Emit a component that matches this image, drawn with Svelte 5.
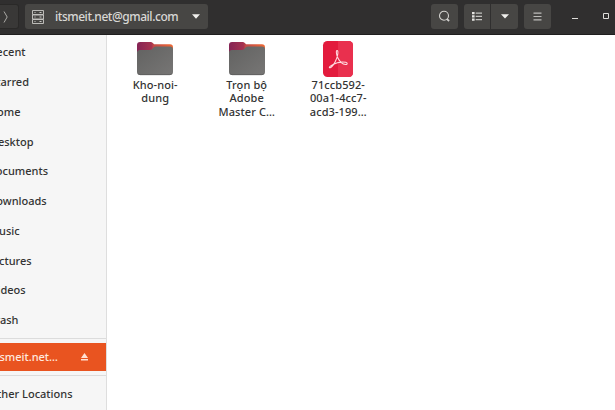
<script>
  // `end` is where each label stops inside the partly scrolled-off sidebar
  const places = [
    { name: 'Recent', end: 25.5 },
    { name: 'Starred', end: 29 },
    { name: 'Home', end: 20.5 },
    { name: 'Desktop', end: 33.5 },
    { name: 'Documents', end: 48 },
    { name: 'Downloads', end: 46.7 },
    { name: 'Music', end: 19.7 },
    { name: 'Pictures', end: 31.7 },
    { name: 'Videos', end: 25.7 },
    { name: 'Trash', end: 18.5 }
  ];
  const files = [
    { kind: 'folder', lines: ['Kho-noi-', 'dung'] },
    { kind: 'folder', lines: ['Trọn bộ', 'Adobe', 'Master C…'] },
    { kind: 'pdf', lines: ['71ccb592-', '00a1-4cc7-', 'acd3-199…'] }
  ];
</script>

<div class="window">
  <header>
    <div class="btn forward">
      <svg width="8" height="14" viewBox="0 0 8 14"><path d="M2 1.5 5.2 7 2 12.5" fill="none" stroke="#aaa9a5" stroke-width="1" /></svg>
    </div>
    <div class="btn location">
      <svg width="12" height="14" viewBox="0 0 12 14" fill="none" stroke="#c9c8c5">
        <path d="M.5 .5h11v4H.5zM.5 5h11v4H.5zM.5 9.500h11v4H.5z" stroke-width=".9" />
        <path d="M2.500 2.500h1M7.500 2.500h2M2.500 7h1M7.500 7h2M2.500 11.500h1M7.500 11.500h2" />
      </svg>
      <span>itsmeit.net@gmail.com</span>
      <svg class="arrow" width="8" height="5" viewBox="0 0 8 5"><path d="M0 .3h8L4 4.8z" fill="#f1f0ed" /></svg>
    </div>
    <div class="spacer"></div>
    <div class="btn search">
      <svg width="13" height="13" viewBox="0 0 13 13" fill="none" stroke="#d3d2cf"><circle cx="6" cy="5.7" r="4.500" stroke-width="1.1" /><path d="m8.7 8.8 2.4 2.2" stroke-width="1.8" /></svg>
    </div>
    <div class="btn list">
      <svg width="10" height="9" viewBox="0 0 10 9"><path d="M0 0h2.6v2.2H0zM0 3.3h2.6v2.2H0zM0 6.6h2.6v2.2H0z" fill="#e4e3e0" /><path d="M3.7 1.2H10M3.7 4.4H10M3.7 7.7H10" stroke="#c4c3c0" stroke-width="1.2" /></svg>
    </div>
    <div class="btn options">
      <svg width="8" height="5" viewBox="0 0 8 5"><path d="M0 .3h8L4 4.6z" fill="#f1f0ed" /></svg>
    </div>
    <div class="btn menu">
      <svg width="9" height="9" viewBox="0 0 9 9"><path d="M.5 1.2h8M.5 4.5h8M.5 7.8h8" stroke="#bdbcb9" stroke-width="1.2" /></svg>
    </div>
    <svg class="controls" width="44" height="12" viewBox="0 0 44 12" fill="none" stroke="#dddcd9"><path d="M1 8.5h6" /><path d="M32.5 3.5h5v5h-5z" /></svg>
  </header>

  <main>
    <aside>
      <nav>
        {#each places as place}
          <div class="row"><span style:width="{place.end}px">{place.name}</span></div>
        {/each}
      </nav>
      <div class="mount">
        <span>itsmeit.net…</span>
        <svg width="7" height="8" viewBox="0 0 7 8"><path d="M3.5 0 7 5H0zM0 6h7v1.4H0z" fill="#ffe0d3" /></svg>
      </div>
      <div class="other"><span>Other Locations</span></div>
    </aside>

    <section>
      {#each files as file, i}
        <div class="file">
          {#if file.kind === 'folder'}
            <svg width="38" height="36" viewBox="0 0 38 36">
              <defs>
                <linearGradient id="back{i}" gradientUnits="userSpaceOnUse" x1="1" x2="37" y1="0" y2="0"><stop offset="0" stop-color="#852455" /><stop offset=".4" stop-color="#a53350" /><stop offset=".46" stop-color="#c04a48" /><stop offset="1" stop-color="#ef6a34" /></linearGradient>
                <linearGradient id="front{i}" x2="1" y2="1"><stop offset="0" stop-color="#626261" /><stop offset="1" stop-color="#777675" /></linearGradient>
              </defs>
              <path d="M1 4q0-3 3-3h10.5q1.500 0 2.600 1.200l1 1h15.900q3 0 3 3v12H1z" fill="url(#back{i})" />
              <path d="M1 11.500q0-2.500 3-2.500h9.500q1.800 0 2.900-1.200l1.200-1.200q1-1 2.500-1h13.900q3 0 3 3V31q0 3-3 3H4q-3 0-3-3z" fill="url(#front{i})" />
              <path d="M2 32.500q.7 1.200 2.500 1.200h29q1.800 0 2.500-1.200" fill="none" stroke="#585757" stroke-width=".7" />
            </svg>
          {:else}
            <svg width="38" height="36" viewBox="0 0 38 36">
              <rect x="4" y="0" width="30" height="36" rx="4.500" fill="#e31b3d" />
              <path d="M19 0h10.500q4.500 0 4.500 4.500v27q0 4.500-4.500 4.500H19z" fill="#e9304e" />
              <path d="M18 9.500c-1.200.2-.6 4.600.9 7.400 1.600 3.200 4.500 6.100 7.700 6.600 2.100.3 2.200-1.600.1-2.200-3.900-1-9.100.2-13.900 2.800-3.100 1.600-2.800 3.100-1.500 2.600 3-1.200 6.900-8.600 7.500-13.800.2-2 .1-3.500-.8-3.400z" fill="none" stroke="#ffdce0" stroke-width="1.05" stroke-linejoin="round" />
            </svg>
          {/if}
          <div class="label">
            {#each file.lines as line}<div>{line}</div>{/each}
          </div>
        </div>
      {/each}
    </section>
  </main>
</div>

<style>
  .window {
    width: 615px;
    height: 410px;
    overflow: hidden;
    display: flex;
    flex-direction: column;
    font: 500 11px/13px "Noto Sans", "Open Sans", sans-serif;
    color: #333;
    background: #fff;
  }
  svg { display: block; flex: none; }
  header {
    box-sizing: border-box;
    height: 35px;
    flex: none;
    display: flex;
    align-items: flex-start;
    padding-top: 4px;
    background: #302f2f;
    border-bottom: 1px solid #1f1e1e;
  }
  .btn {
    box-sizing: border-box;
    height: 25px;
    display: flex;
    align-items: center;
    justify-content: center;
    background: #474644;
    border-radius: 3px;
    flex: none;
  }
  .forward { width: 19px; margin-right: 6px; padding-right: 7px; background: #393837; border: 1px solid #2a2928; border-left: 0; border-radius: 0 3px 3px 0; }
  .location { width: 183px; justify-content: flex-start; padding-left: 7px; }
  .location span { width: 123px; margin-left: 11px; font-size: 12px; letter-spacing: -.46px; color: #d9d8d5; white-space: nowrap; }
  .arrow { margin-left: 14px; }
  .spacer { flex: 1; }
  .search { width: 27px; margin-right: 6px; }
  .list { width: 26px; border-radius: 3px 0 0 3px; margin-right: 1px; }
  .options { width: 27px; border-radius: 0 3px 3px 0; margin-right: 6px; }
  .menu { width: 27px; margin-right: 20px; }
  .controls { margin: 6px 0 0; }
  main { display: flex; flex: 1; min-height: 0; }
  aside {
    box-sizing: border-box;
    width: 107px;
    flex: none;
    background: #f6f6f6;
    border-right: 1px solid #dedede;
    overflow: hidden;
    display: flex;
    flex-direction: column;
  }
  nav { height: 304px; box-sizing: border-box; padding-top: 2px; border-bottom: 1px solid #dcdcdc; flex: none; }
  .row { height: 29.75px; display: flex; align-items: center; overflow: hidden; }
  .row span, .mount span, .other span { display: flex; justify-content: flex-end; flex: none; white-space: nowrap; }
  .mount {
    height: 28px;
    margin: 4px 0 4px;
    display: flex;
    align-items: center;
    background: #e95420;
    color: #ffe9df;
    flex: none;
  }
  .mount span { width: 58px; padding-bottom: 2px; }
  .mount svg { margin-left: 23px; }
  .other { border-top: 1px solid #dcdcdc; height: 34px; display: flex; align-items: center; }
  .other span { width: 72.5px; }
  section { display: flex; align-items: flex-start; padding: 6px 0 0 2.500px; }
  .file { width: 91.500px; display: flex; flex-direction: column; align-items: center; }
  .label { margin-top: 1px; line-height: 13.4px; letter-spacing: .1px; text-align: center; white-space: nowrap; }
</style>
